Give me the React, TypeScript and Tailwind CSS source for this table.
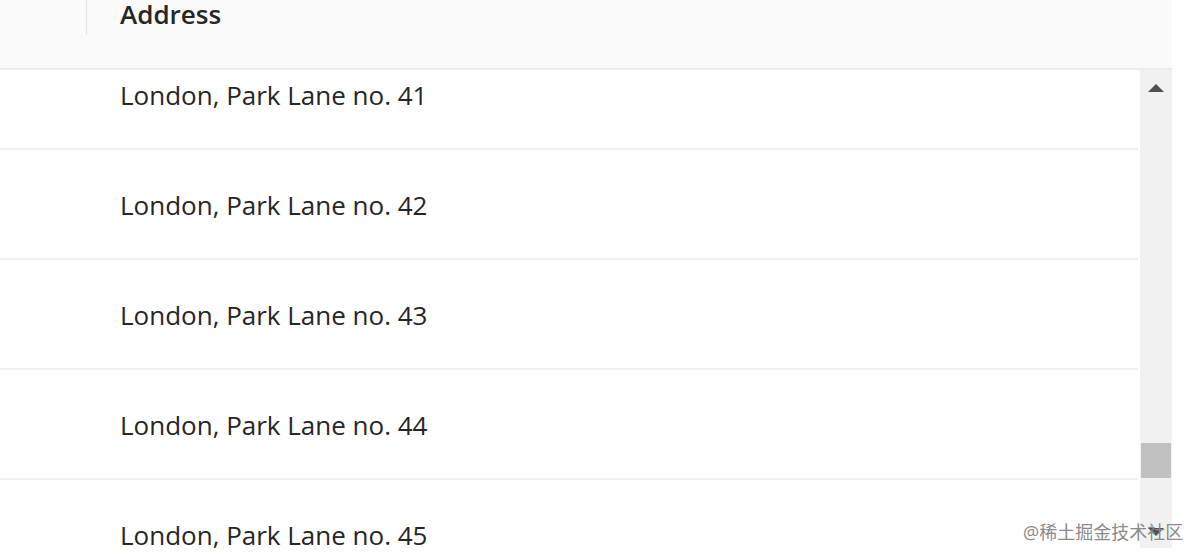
const rows = [41, 42, 43, 44, 45, 46];

function ScrollBar() {
  return (
    <div className="w-[34px] h-[478px] bg-[#f1f1f1] border-l-2 border-white flex flex-col items-center">
      <div className="mt-[14px] w-0 h-0 border-l-[8px] border-r-[8px] border-b-[8px] border-l-transparent border-r-transparent border-b-[#505050]" />
      <div className="mt-[351px] w-[30px] h-[35px] bg-[#c1c1c1]" />
      <div className="mt-[50px] w-0 h-0 border-l-[8px] border-r-[8px] border-t-[8px] border-l-transparent border-r-transparent border-t-[#505050]" />
    </div>
  );
}

export default function App() {
  return (
    <div
      className="relative w-[1200px] h-[560px] bg-white overflow-hidden text-[#262626]"
      style={{ fontFamily: '"Open Sans", "Noto Sans CJK SC", sans-serif' }}
    >
      <div className="w-[1172px] h-[70px] bg-[#fafafa] border-b-2 border-[#ececec] flex items-start">
        <div className="w-[87px] h-[35px] border-r border-[#e4e4e4]" />
        <div className="pl-[33px] text-[26px] font-semibold leading-[32px] -mt-[2px]">Address</div>
      </div>
      <div className="flex">
        <div className="w-[1138px] h-[478px] overflow-hidden">
          <div className="-mt-[30px]">
            {rows.map((n) => (
              <div
                key={n}
                className="h-[110px] border-b-2 border-[#f0f0f0] flex items-center pl-[120px] text-[26px] pt-[2px]"
              >
                London, Park Lane no. {n}
              </div>
            ))}
          </div>
        </div>
        <ScrollBar />
      </div>
      <div className="absolute left-[1023px] top-[520px] whitespace-nowrap text-[18px] text-[#8a8a8a] leading-[24px]">
        @稀土掘金技术社区
      </div>
    </div>
  );
}
